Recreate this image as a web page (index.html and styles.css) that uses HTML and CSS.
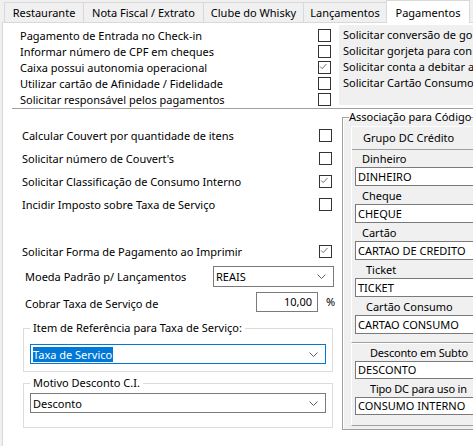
FILE: index.html
```html
<!DOCTYPE html>
<html lang="pt-BR">

<head>
    <meta charset="UTF-8">
    <meta name="viewport" content="width=device-width, initial-scale=1">
    <title>Pagamentos</title>
    <link rel="stylesheet" href="styles.css">
</head>

<body>

    <!-- Tab strip -->
    <div class="tabs">
        <div class="tab tab-rest">Restaurante</div>
        <div class="tab tab-nota">Nota Fiscal / Extrato</div>
        <div class="tab tab-clube">Clube do Whisky</div>
        <div class="tab tab-lanc">Lançamentos</div>
        <div class="tab tab-pag active">Pagamentos</div>
    </div>

    <div class="page">
        <!-- Top block: general flags -->
        <div class="top">
            <div class="flags">
                <div class="flag-row"><span>Pagamento de Entrada no Check-in</span><span class="box"></span></div>
                <div class="flag-row"><span>Informar número de CPF em cheques</span><span class="box"></span></div>
                <div class="flag-row"><span>Caixa possui autonomia operacional</span><span class="box checked"><svg viewBox="0 0 13 13"><polyline points="2.5,6.5 5,9 10,3.5" /></svg></span></div>
                <div class="flag-row"><span>Utilizar cartão de Afinidade / Fidelidade</span><span class="box"></span></div>
                <div class="flag-row"><span>Solicitar responsável pelos pagamentos</span><span class="box"></span></div>
            </div>
            <div class="extras">
                <div class="extra-row">Solicitar conversão de go</div>
                <div class="extra-row">Solicitar gorjeta para con</div>
                <div class="extra-row">Solicitar conta a debitar a</div>
                <div class="extra-row">Solicitar Cartão Consumo</div>
            </div>
        </div>

        <div class="divider"></div>

        <div class="bottom">
            <div class="main">
                <div class="check-list">
                    <div class="check-row"><span>Calcular Couvert por quantidade de itens</span><span class="box"></span></div>
                    <div class="check-row"><span>Solicitar número de Couvert's</span><span class="box"></span></div>
                    <div class="check-row"><span>Solicitar Classificação de Consumo Interno</span><span class="box checked"><svg viewBox="0 0 13 13"><polyline points="2.5,6.5 5,9 10,3.5" /></svg></span></div>
                    <div class="check-row"><span>Incidir Imposto sobre Taxa de Serviço</span><span class="box"></span></div>
                </div>

                <div class="check-row print-row"><span>Solicitar Forma de Pagamento ao Imprimir</span><span class="box checked"><svg viewBox="0 0 13 13"><polyline points="2.5,6.5 5,9 10,3.5" /></svg></span></div>

                <div class="field-row">
                    <span class="field-label">Moeda Padrão p/ Lançamentos</span>
                    <div class="combo combo-moeda">
                        <span>REAIS</span>
                        <svg class="chevron" viewBox="0 0 9 5"><polyline points="0.5,0.5 4.5,4.5 8.5,0.5" /></svg>
                    </div>
                </div>

                <div class="field-row tax-row">
                    <span class="field-label tax-label">Cobrar Taxa de Serviço de</span>
                    <div class="num-input">10,00</div>
                    <span class="percent">%</span>
                </div>

                <fieldset class="group group-ref">
                    <legend>Item de Referência para Taxa de Serviço:</legend>
                    <div class="combo focused">
                        <span class="selected-text">Taxa de Servico</span>
                        <svg class="chevron" viewBox="0 0 9 5"><polyline points="0.5,0.5 4.5,4.5 8.5,0.5" /></svg>
                    </div>
                </fieldset>

                <fieldset class="group group-motivo">
                    <legend>Motivo Desconto C.I.</legend>
                    <div class="combo">
                        <span>Desconto</span>
                        <svg class="chevron" viewBox="0 0 9 5"><polyline points="0.5,0.5 4.5,4.5 8.5,0.5" /></svg>
                    </div>
                </fieldset>
            </div>

            <!-- Right side: code association -->
            <fieldset class="assoc">
                <legend>Associação para Código</legend>
                <div class="panel panel-credit">
                    <div class="panel-head">Grupo DC Crédito</div>
                    <div class="assoc-label">Dinheiro</div>
                    <div class="assoc-input">DINHEIRO</div>
                    <div class="assoc-label">Cheque</div>
                    <div class="assoc-input">CHEQUE</div>
                    <div class="assoc-label">Cartão</div>
                    <div class="assoc-input">CARTAO DE CREDITO</div>
                    <div class="assoc-label indent">Ticket</div>
                    <div class="assoc-input">TICKET</div>
                    <div class="assoc-label indent">Cartão Consumo</div>
                    <div class="assoc-input">CARTAO CONSUMO</div>
                </div>
                <div class="panel panel-debit">
                    <div class="assoc-label wide">Desconto em Subto</div>
                    <div class="assoc-input">DESCONTO</div>
                    <div class="assoc-label wide">Tipo DC para uso in</div>
                    <div class="assoc-input">CONSUMO INTERNO</div>
                </div>
            </fieldset>
        </div>
    </div>

</body>

</html>
```

FILE: styles.css
```css
/* Pagamentos tab page */
body {
    margin: 0;
    width: 473px;
    height: 446px;
    overflow: hidden;
    background-color: #f0f0f0;
    font-family: 'Noto Sans', 'Open Sans', sans-serif;
    font-size: 11px;
    color: #000;
}

/* Tab strip */
.tabs {
    display: flex;
    align-items: flex-end;
    height: 22px;
    padding-left: 4px;
    position: relative;
    z-index: 1;
}

.tab {
    box-sizing: border-box;
    height: 20px;
    line-height: 19px;
    text-align: center;
    background-color: #f0f0f0;
    border: 1px solid #d9d9d9;
    border-bottom: none;
    margin-right: -1px;
    white-space: nowrap;
}

.tab-rest { width: 80px; }
.tab-nota { width: 121px; }
.tab-clube { width: 101px; }
.tab-lanc { width: 84px; }
.tab-pag { width: 84px; }

.tab.active {
    height: 23px;
    line-height: 24px;
    background-color: white;
    margin-bottom: -1px;
}

.page {
    width: 471px;
    height: 424px;
    margin-left: 2px;
    background-color: white;
    border-left: 1px solid #d9d9d9;
    border-top: 1px solid #d9d9d9;
    box-sizing: border-box;
    overflow: hidden;
}

/* Top block */
.top {
    display: flex;
    height: 85px;
}

.flags {
    width: 311px;
    margin-left: 17px;
    padding-top: 4px;
    flex-shrink: 0;
}

.flag-row,
.check-row {
    display: flex;
    justify-content: space-between;
    align-items: center;
    height: 16px;
    white-space: nowrap;
}

.box {
    box-sizing: border-box;
    width: 13px;
    height: 13px;
    border: 1px solid #333;
    background-color: white;
    flex-shrink: 0;
}

.box svg {
    display: block;
    width: 11px;
    height: 11px;
    margin: -1px 0 0 -1px;
    fill: none;
    stroke: #555;
    stroke-width: 1;
}

.extras {
    margin-left: 8px;
    margin-top: 2px;
    flex: 1;
    height: 80px;
    padding: 2px 0 2px 4px;
    box-sizing: border-box;
    background-color: #f0f0f0;
    overflow: hidden;
}

.extra-row {
    height: 16px;
    line-height: 16px;
    white-space: nowrap;
}

.divider {
    margin-left: 9px;
    border-top: 1px solid #a0a0a0;
}

/* Bottom block */
.bottom {
    display: flex;
}

.main {
    width: 339px;
    flex-shrink: 0;
}

.check-list {
    margin-left: 19px;
    width: 310px;
    padding-top: 15px;
}

.check-list .check-row {
    height: 23px;
}

.print-row {
    margin-left: 19px;
    width: 310px;
    height: 23px;
    margin-top: 24px;
}

.field-row {
    display: flex;
    align-items: center;
    margin-left: 22px;
    margin-top: 3px;
    height: 21px;
    white-space: nowrap;
}

.field-label {
    width: 188px;
}

.combo {
    box-sizing: border-box;
    display: flex;
    justify-content: space-between;
    align-items: center;
    height: 20px;
    border: 1px solid #7a7a7a;
    background-color: white;
    padding: 0 7px 0 2px;
}

.combo-moeda {
    width: 121px;
    height: 21px;
}

.chevron {
    width: 9px;
    height: 5px;
    fill: none;
    stroke: #606060;
    stroke-width: 1;
}

.tax-row {
    margin-top: 4px;
}

.tax-label {
    width: 231px;
    padding-top: 3px;
}

.num-input {
    box-sizing: border-box;
    width: 62px;
    height: 20px;
    line-height: 18px;
    border: 1px solid #7a7a7a;
    text-align: right;
    padding-right: 5px;
}

.percent {
    margin-left: 8px;
}

/* Group boxes */
.group {
    box-sizing: border-box;
    width: 310px;
    margin: 0 0 0 20px;
    border: 1px solid #dcdcdc;
    padding: 0 6px 7px 6px;
}

.group legend {
    padding: 0 3px;
    line-height: 16px;
    white-space: nowrap;
}

.group-ref {
    margin-top: 8px;
}

.group-ref .combo {
    margin-top: 8px;
}

.combo.focused {
    border-color: #0078d7;
}

.selected-text {
    background-color: #0078d7;
    color: white;
    line-height: 15px;
    padding-right: 1px;
}

.group-motivo {
    margin-top: 3px;
    padding-bottom: 14px;
}

.group-motivo .combo {
    margin-top: 2px;
}

/* Right association group */
.assoc {
    box-sizing: border-box;
    flex: 1;
    min-width: 0;
    margin: 0;
    padding: 0 0 4px 8px;
    border: 1px solid #a0a0a0;
    border-right: none;
    background-color: #f0f0f0;
    box-shadow: inset 1px 1px 0 white;
    height: 321px;
}

.assoc legend {
    padding: 0;
    margin-left: -2px;
    line-height: 16px;
    white-space: nowrap;
}

.panel {
    border-top: 1px solid white;
    border-left: 1px solid white;
    border-bottom: 1px solid #a0a0a0;
    padding-left: 3px;
}

.panel-credit {
    margin-top: 1px;
    padding-bottom: 7px;
}

.panel-head {
    height: 22px;
    line-height: 22px;
    padding-left: 11px;
    margin-left: -3px;
    border-bottom: 1px solid #a0a0a0;
}

.assoc-label {
    height: 17px;
    line-height: 17px;
    padding-left: 7px;
    white-space: nowrap;
}

.assoc-label.indent {
    padding-left: 11px;
}

.assoc-label.wide {
    padding-left: 15px;
    letter-spacing: -0.2px;
}

.assoc-input {
    box-sizing: border-box;
    height: 19px;
    line-height: 17px;
    margin-bottom: 1px;
    border: 1px solid #7a7a7a;
    border-right: none;
    background-color: white;
    padding-left: 2px;
    white-space: nowrap;
}

.panel-debit {
    padding-bottom: 9px;
}

.panel-debit .assoc-input {
    height: 18px;
    line-height: 16px;
    margin-bottom: 1px;
}
```
